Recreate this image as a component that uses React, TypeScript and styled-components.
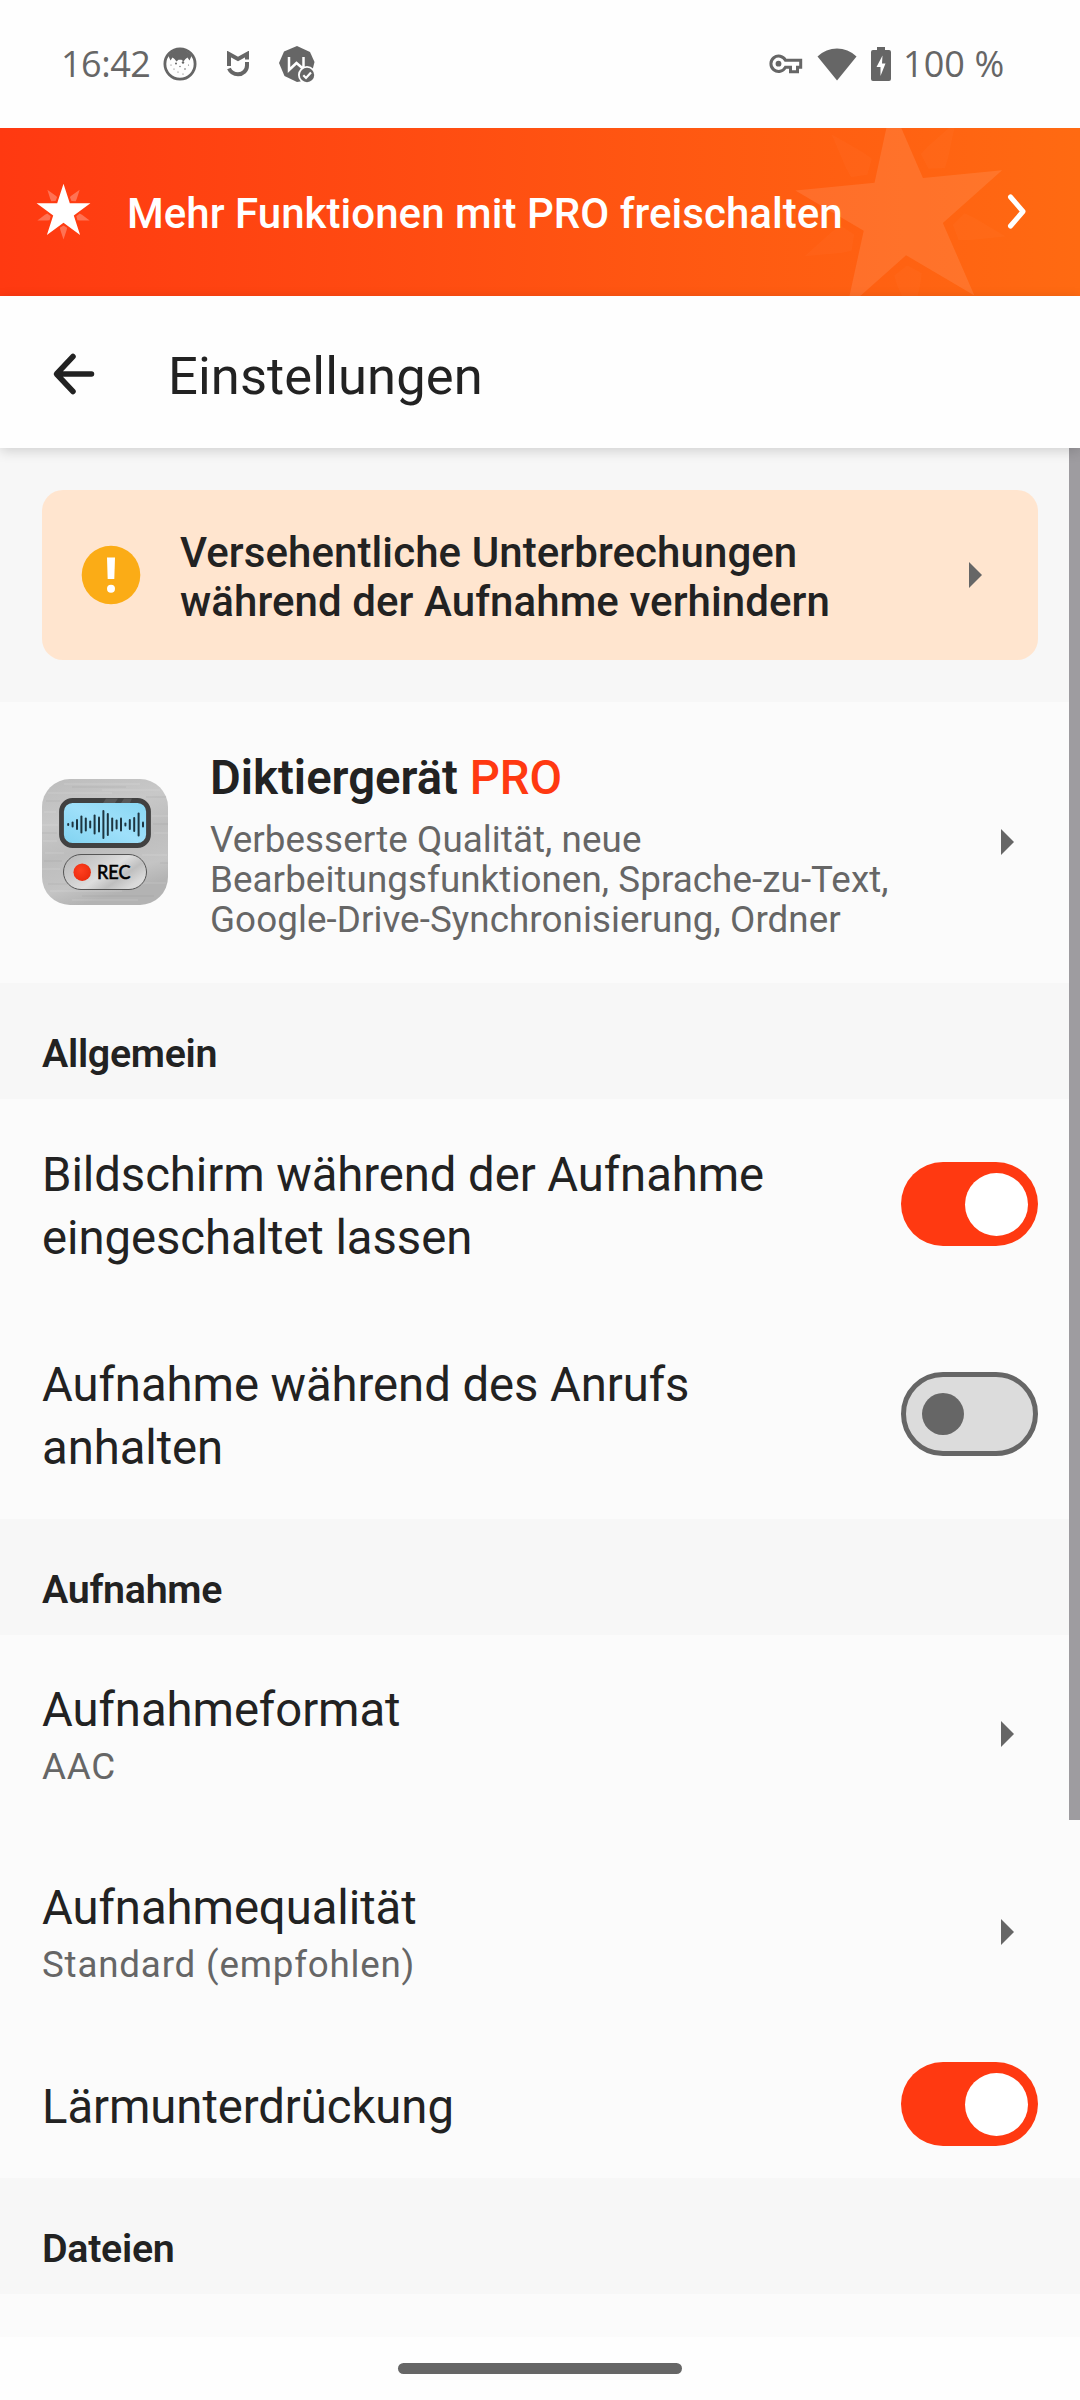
import React from 'react';
import styled, { createGlobalStyle } from 'styled-components';

const GlobalStyle = createGlobalStyle`
  *, *::before, *::after { box-sizing: border-box; }
  html, body { margin: 0; padding: 0; }
  body { font-family: Roboto, "Noto Sans", sans-serif; color: #222; background: #fefefe; }
`;

const Screen = styled.div`
  width: 1080px;
  height: 2400px;
  display: flex;
  flex-direction: column;
  overflow: hidden;
  background: #fefefe;
`;

const StatusBar = styled.div`
  height: 128px;
  flex: none;
  display: flex;
  align-items: center;
  padding: 0 77px 0 61px;
  color: #666;
  font-family: "Open Sans", sans-serif;
  font-size: 36px;
  font-weight: 500;
`;

const Clock = styled.span`
  width: 102px;
  line-height: 50px;
  letter-spacing: -0.5px;
  white-space: nowrap;
`;

const StatusIcons = styled.div<{ $gap: number }>`
  display: flex;
  align-items: center;
  gap: ${(p) => p.$gap}px;
`;

const StatusRight = styled.div`
  margin-left: auto;
  display: flex;
  align-items: center;
`;

const BatteryText = styled.span`
  margin-left: 12px;
  width: 100px;
  line-height: 50px;
  white-space: nowrap;
  letter-spacing: 0.1px;
`;

const ProBanner = styled.div`
  position: relative;
  height: 168px;
  flex: none;
  display: flex;
  align-items: center;
  padding: 0 51px 0 36px;
  background: linear-gradient(90deg, #ff3911 0%, #ff6a12 100%);
  color: #fff;
  overflow: hidden;
`;

const BannerBackdrop = styled.svg`
  position: absolute;
  right: 70px;
  top: 0;
`;

const BannerLabel = styled.span`
  position: relative;
  margin-left: 36px;
  flex: 1;
  font-size: 42px;
  font-weight: 500;
  line-height: 50px;
  letter-spacing: 0.04px;
  white-space: nowrap;
  padding-top: 4px;
`;

const AppBar = styled.header`
  position: relative;
  z-index: 1;
  height: 152px;
  flex: none;
  display: flex;
  align-items: center;
  padding: 4px 0 0 49px;
  background: #fefefe;
  box-shadow: 0 3px 12px rgba(0, 0, 0, 0.16);
`;

const AppTitle = styled.h1`
  margin: 4px 0 0 67px;
  font-size: 52.5px;
  font-weight: 400;
  line-height: 62px;
  letter-spacing: 0.1px;
`;

const Content = styled.main`
  position: relative;
  flex: 1;
  min-height: 0;
  overflow: hidden;
  background: #fbfbfb;
`;

const Scrollbar = styled.div`
  position: absolute;
  top: 0;
  right: 0;
  width: 11px;
  height: 1372px;
  background: #9e9ca0;
`;

const AlertArea = styled.div`
  padding: 42px;
  background: #f7f7f7;
`;

const AlertCard = styled.div`
  height: 170px;
  display: flex;
  align-items: center;
  padding: 0 56px 0 39px;
  border-radius: 21px;
  background: #ffe5cf;
`;

const AlertText = styled.div`
  flex: 1;
  margin-left: 39px;
  padding-top: 3px;
  font-size: 42px;
  font-weight: 500;
  line-height: 49px;
  letter-spacing: 0.08px;
  white-space: pre-line;
`;

const ProRow = styled.div`
  height: 281px;
  display: flex;
  align-items: center;
  padding: 0 66px 1px 42px;
`;

const ProInfo = styled.div`
  flex: 1;
  margin-left: 42px;
  padding-top: 6px;
`;

const ProTitle = styled.div`
  font-size: 47.25px;
  font-weight: 600;
  line-height: 56px;
`;

const ProTag = styled.span`
  color: #ff3911;
  font-weight: 500;
`;

const ProText = styled.div`
  margin-top: 14px;
  font-size: 36.75px;
  line-height: 40px;
  letter-spacing: 0.08px;
  color: #666;
  white-space: pre-line;
`;

const SectionTitle = styled.h2`
  margin: 0;
  height: 116px;
  padding: 47px 42px 0;
  background: #f7f7f7;
  font-size: 39.375px;
  font-weight: 600;
  line-height: 48px;
  letter-spacing: -0.3px;
`;

const Row = styled.div<{ $height: number; $end: number }>`
  height: ${(p) => p.$height}px;
  display: flex;
  align-items: center;
  justify-content: space-between;
  padding: 0 ${(p) => p.$end}px ${(p) => p.$height % 2}px 42px;
`;

const RowLabel = styled.div<{ $tight?: boolean }>`
  padding-top: 6px;
  font-size: 47.25px;
  line-height: ${(p) => (p.$tight ? 56 : 63)}px;
  letter-spacing: -0.06px;
  white-space: pre-line;
`;

const RowValue = styled.div`
  margin-top: 4px;
  font-size: 36.75px;
  line-height: 50px;
  letter-spacing: 0.8px;
  color: #666;
`;

const Track = styled.div<{ $on: boolean }>`
  width: 137px;
  height: 84px;
  flex: none;
  display: flex;
  align-items: center;
  justify-content: ${(p) => (p.$on ? 'flex-end' : 'flex-start')};
  padding: ${(p) => (p.$on ? '0 10.5px' : '0 16px')};
  border-radius: 42px;
  border: ${(p) => (p.$on ? 'none' : '5px solid #666')};
  background: ${(p) => (p.$on ? '#ff3911' : '#dcdcdc')};
`;

const Thumb = styled.div<{ $on: boolean }>`
  width: ${(p) => (p.$on ? 63 : 42)}px;
  height: ${(p) => (p.$on ? 63 : 42)}px;
  border-radius: 50%;
  background: ${(p) => (p.$on ? '#fff' : '#666')};
`;

const NavBar = styled.div`
  height: 63px;
  flex: none;
  display: flex;
  justify-content: center;
  padding-top: 26px;
  background: #fefefe;
`;

const NavHandle = styled.div`
  width: 284px;
  height: 11px;
  border-radius: 6px;
  background: #666;
`;

const Switch = ({ on }: { on: boolean }) => (
  <Track $on={on}>
    <Thumb $on={on} />
  </Track>
);

const Caret = () => (
  <svg width="13" height="26" viewBox="0 0 13 26">
    <path d="M0 0L13 13L0 26Z" fill="#666" />
  </svg>
);

const StarShape = ({ star, ray }: { star: number; ray: number }) => (
  <>
    <path
      d="M0 -28.3L6.3 -8.7L26.9 -8.7L10.3 3.4L16.6 22.9L0 10.8L-16.6 22.9L-10.3 3.4L-26.9 -8.7L-6.3 -8.7Z"
      fill="#fff"
      fillOpacity={star}
    />
    {[0, 72, 144, 216, 288].map((a) => (
      <path key={a} transform={`rotate(${a})`} d="M0 13.5L3.600 15.800L3 18.500L0 27.500L-3 18.500L-3.600 15.800Z" fill="#fff" fillOpacity={ray} />
    ))}
  </>
);

const FaceIcon = () => (
  <svg width="34" height="34" viewBox="0 0 34 34">
    <circle cx="17" cy="17" r="15.1" fill="none" stroke="#666" strokeWidth="2.8" />
    <path d="M5.500 9C9 4 13 2.500 17 2.500S25 4 28.500 9L26.500 13.500L24.500 10.500L22.500 12L20.500 14.500L18.500 12.800H15.500L13.500 14.500L11.500 12L9.500 10.500L7.500 13.500Z" fill="#666" />
    <g fill="#666">
      <circle cx="13" cy="16.500" r="1" />
      <circle cx="20" cy="15.500" r="1.200" />
      <circle cx="8" cy="18" r=".6" />
      <circle cx="25.500" cy="18" r=".6" />
      <circle cx="17" cy="19.500" r=".7" />
      <circle cx="11" cy="22" r=".6" />
      <circle cx="22" cy="22" r=".8" />
      <circle cx="15" cy="25" r=".6" />
      <circle cx="20" cy="27" r=".6" />
    </g>
  </svg>
);

const ShieldIcon = () => (
  <svg width="22" height="26" viewBox="0 0 22 26" fill="none" stroke="#666" strokeWidth="4">
    <path d="M2 15V3L11 8L20 3V8.500" />
    <path d="M2 17.500C3.500 21 7 23.200 11 23.200C16 23.200 20 19.500 20 14.500V11" />
  </svg>
);

const BadgeIcon = () => (
  <svg width="38" height="38" viewBox="0 0 38 38">
    <path d="M19 1L32 7L36.500 17L34 27L25 36L19 37L6.500 31L1 18L6 6.500Z" fill="#666" />
    <path d="M11 12V25L18.500 18L25.500 24V12" fill="none" stroke="#fefefe" strokeWidth="2.500" strokeLinejoin="miter" />
    <circle cx="29" cy="30" r="9" fill="#fefefe" />
    <circle cx="29" cy="30" r="7.200" fill="#666" />
    <path d="M25.300 30.300L28 33L33 27.500" fill="none" stroke="#fefefe" strokeWidth="2.200" />
  </svg>
);

const KeyIcon = () => (
  <svg width="34" height="20" viewBox="0 0 34 20">
    <path d="M16.500 6.300H31.700V13.200H28.500V17.700H21.500V13.200H16.500A7.700 7.700 0 1 1 16.500 6.300Z" fill="none" stroke="#666" strokeWidth="3" />
    <circle cx="9.500" cy="9.700" r="2.900" fill="#666" />
  </svg>
);

const WifiIcon = () => (
  <svg width="40" height="33" viewBox="0 0 40 33">
    <path d="M0.500 8.500C6 3.200 13 0.500 20 0.500S34 3.200 39.500 8.500L20 32.500Z" fill="#666" />
  </svg>
);

const BatteryIcon = () => (
  <svg width="20" height="34" viewBox="0 0 20 34">
    <path d="M6 0H14V3H18A2 2 0 0 1 20 5V32A2 2 0 0 1 18 34H2A2 2 0 0 1 0 32V5A2 2 0 0 1 2 3H6Z" fill="#666" />
    <path d="M11.500 8.500L5.500 20H9.500V29L14.500 16.500H11Z" fill="#fefefe" />
  </svg>
);

const BackIcon = () => (
  <svg width="52" height="52" viewBox="0 0 52 52" fill="none" stroke="#222" strokeWidth="5.500" strokeLinecap="round" strokeLinejoin="round">
    <path d="M24 8.500L7.500 26L24 43.500M8 26H42.500" />
  </svg>
);

const WarningIcon = () => (
  <svg width="60" height="60" viewBox="0 0 60 60">
    <circle cx="30" cy="30" r="29.300" fill="#fbac16" />
    <path d="M26 12.500H34L33.300 34H26.700Z" fill="#fff" />
    <circle cx="30" cy="43.700" r="4" fill="#fff" />
  </svg>
);

const waveBars = [3, 6, 11, 18, 14, 8, 20, 16, 29, 23, 14, 10, 14, 4, 11, 15, 24, 6];

const RecorderIcon = () => (
  <svg width="126" height="126" viewBox="0 0 126 126">
    <defs>
      <linearGradient id="metal" x1="0" y1="0" x2="0.300" y2="1">
        <stop offset="0" stopColor="#bcbcbc" />
        <stop offset="0.350" stopColor="#c8c8c8" />
        <stop offset="0.600" stopColor="#bdbdbd" />
        <stop offset="0.850" stopColor="#c4c4c4" />
        <stop offset="1" stopColor="#b3b3b3" />
      </linearGradient>
      <linearGradient id="glass" x1="0" y1="1" x2="1" y2="0">
        <stop offset="0" stopColor="#7fd2f0" />
        <stop offset="0.500" stopColor="#9fe0fa" />
        <stop offset="1" stopColor="#86d6f2" />
      </linearGradient>
      <linearGradient id="pill" x1="0" y1="0" x2="1" y2="0.600">
        <stop offset="0" stopColor="#b5b5b5" />
        <stop offset="0.400" stopColor="#cfcfcf" />
        <stop offset="0.600" stopColor="#dedede" />
        <stop offset="0.800" stopColor="#bfbfbf" />
        <stop offset="1" stopColor="#dadada" />
      </linearGradient>
      <radialGradient id="rec" cx="0.400" cy="0.400" r="0.700">
        <stop offset="0" stopColor="#ff4020" />
        <stop offset="1" stopColor="#e8290c" />
      </radialGradient>
    </defs>
    <rect width="126" height="126" rx="28" fill="url(#metal)" />
    <g stroke="#fff" strokeOpacity="0.220" strokeWidth="0.800">
      <path d="M22 5H98M6 14H70M60 11H118M2 33H14M0 46H16M110 37H126M112 54H126M1 62H15M3 74H22M100 76H125M0 90H18M90 104H124M8 112H80M30 121H96" />
    </g>
    <g stroke="#888" strokeOpacity="0.220" strokeWidth="0.800">
      <path d="M30 8H84M4 22H18M104 18H124M0 54H15M111 45H126M2 82H20M118 84H126M6 105H50M40 117H112" />
    </g>
    <rect x="19.500" y="21.500" width="87" height="45" rx="11" fill="url(#glass)" stroke="#414141" strokeWidth="4.800" />
    <path d="M64 19.500H76L73 24H61ZM82 19.500H90L88 24H79Z" fill="#fff" fillOpacity="0.120" />
    <g stroke="#1d3540" strokeWidth="2" strokeLinecap="round">
      {waveBars.map((h, i) => (
        <path key={i} d={`M${26.200 + i * 4.400} ${45.500 - h / 2 + 1}V${45.500 + h / 2 - 1}`} />
      ))}
    </g>
    <rect x="21.500" y="75.500" width="83" height="35" rx="17.500" fill="url(#pill)" stroke="#555" strokeWidth="1" />
    <circle cx="40.200" cy="93.200" r="8.700" fill="url(#rec)" />
    <text x="55" y="99.600" textLength="33.500" lengthAdjust="spacingAndGlyphs" fontFamily="Lato, sans-serif" fontSize="18.500" fontWeight="400" stroke="#000" strokeWidth="0.600" fill="#000">
      REC
    </text>
  </svg>
);

export default function App() {
  return (
    <Screen>
      <GlobalStyle />
      <StatusBar>
        <Clock>16:42</Clock>
        <StatusIcons $gap={29.5}>
          <FaceIcon />
          <ShieldIcon />
          <BadgeIcon />
        </StatusIcons>
        <StatusRight>
          <StatusIcons $gap={14}>
            <KeyIcon />
            <WifiIcon />
            <BatteryIcon />
          </StatusIcons>
          <BatteryText>100 %</BatteryText>
        </StatusRight>
      </StatusBar>

      <ProBanner>
        <BannerBackdrop width="230" height="168" viewBox="780 128 230 168">
          <g transform="translate(902 213.700) rotate(-5.600) scale(3.860)">
            <StarShape star={0.1} ray={0.025} />
          </g>
        </BannerBackdrop>
        <svg width="55" height="58" viewBox="-27.500 -29 55 58">
          <StarShape star={1} ray={0.28} />
        </svg>
        <BannerLabel>Mehr Funktionen mit PRO freischalten</BannerLabel>
        <svg width="24" height="40" viewBox="0 0 24 40" fill="none" stroke="#fff" strokeWidth="5" strokeLinecap="round" strokeLinejoin="round">
          <path d="M5.500 5L18 19.500L5.500 34" />
        </svg>
      </ProBanner>

      <AppBar>
        <BackIcon />
        <AppTitle>Einstellungen</AppTitle>
      </AppBar>

      <Content>
        <AlertArea>
          <AlertCard>
            <WarningIcon />
            <AlertText>{'Versehentliche Unterbrechungen\nwährend der Aufnahme verhindern'}</AlertText>
            <Caret />
          </AlertCard>
        </AlertArea>

        <ProRow>
          <RecorderIcon />
          <ProInfo>
            <ProTitle>
              Diktiergerät <ProTag>PRO</ProTag>
            </ProTitle>
            <ProText>{'Verbesserte Qualität, neue\nBearbeitungsfunktionen, Sprache-zu-Text,\nGoogle-Drive-Synchronisierung, Ordner'}</ProText>
          </ProInfo>
          <Caret />
        </ProRow>

        <SectionTitle>Allgemein</SectionTitle>
        <Row $height={210} $end={42}>
          <RowLabel>{'Bildschirm während der Aufnahme\neingeschaltet lassen'}</RowLabel>
          <Switch on />
        </Row>
        <Row $height={210} $end={42}>
          <RowLabel>{'Aufnahme während des Anrufs\nanhalten'}</RowLabel>
          <Switch on={false} />
        </Row>

        <SectionTitle>Aufnahme</SectionTitle>
        <Row $height={198} $end={66}>
          <div>
            <RowLabel $tight>Aufnahmeformat</RowLabel>
            <RowValue>AAC</RowValue>
          </div>
          <Caret />
        </Row>
        <Row $height={198} $end={66}>
          <div>
            <RowLabel $tight>Aufnahmequalität</RowLabel>
            <RowValue>Standard (empfohlen)</RowValue>
          </div>
          <Caret />
        </Row>
        <Row $height={147} $end={42}>
          <RowLabel>Lärmunterdrückung</RowLabel>
          <Switch on />
        </Row>

        <SectionTitle>Dateien</SectionTitle>
        <Scrollbar />
      </Content>

      <NavBar>
        <NavHandle />
      </NavBar>
    </Screen>
  );
}
